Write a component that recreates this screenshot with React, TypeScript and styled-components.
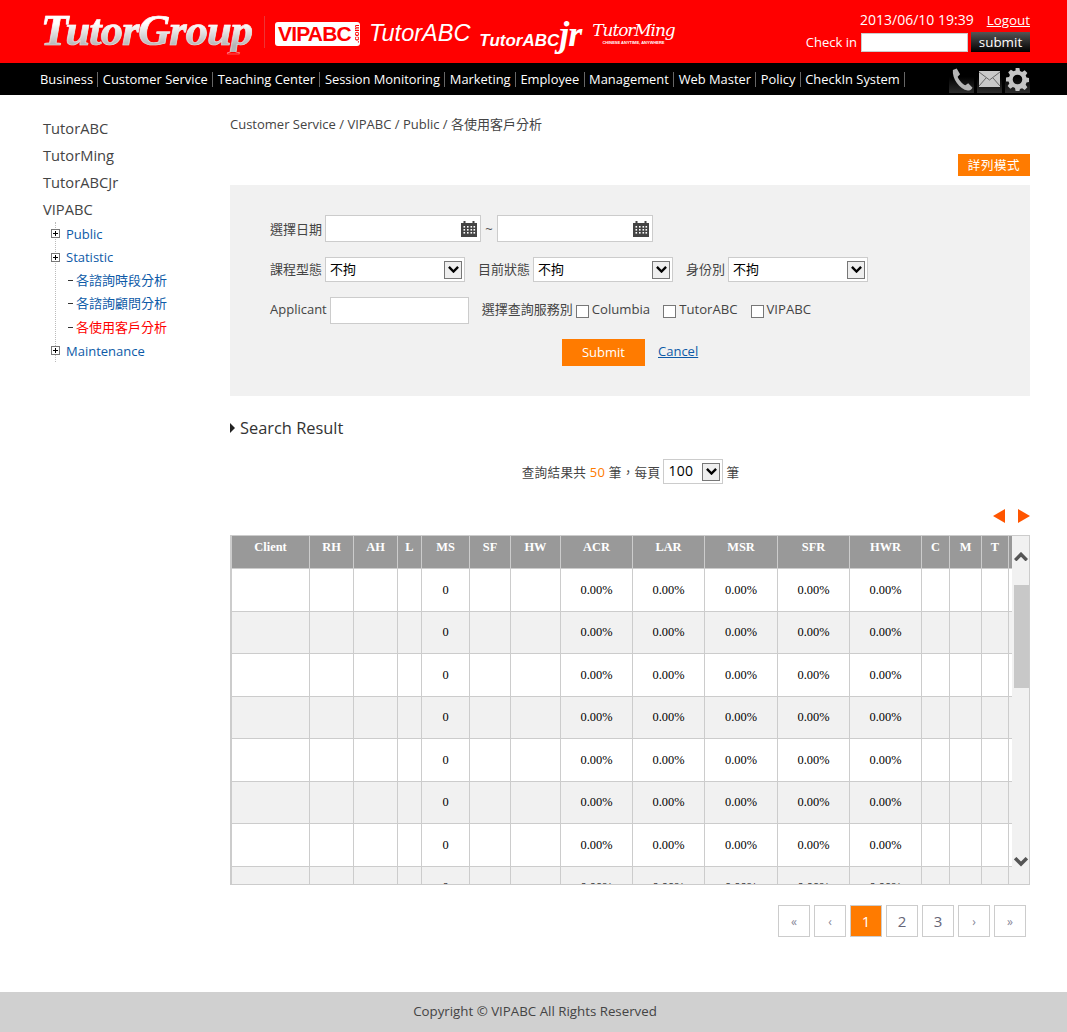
import React from 'react';
import styled, { createGlobalStyle } from 'styled-components';

const Global = createGlobalStyle`
  html, body { margin: 0; padding: 0; background: #fff; }
  body { font-family: "Open Sans", "Noto Sans CJK TC", sans-serif; color: #444; }
`;
const Page = styled.div`
  width: 1067px; min-height: 1032px; display: flex; flex-direction: column;
  font-size: 13px;
`;
const Header = styled.header`
  height: 63px; background: #ff0000; display: flex; justify-content: space-between; box-sizing: border-box;
  padding: 0 37px 0 41px; color: #fff;
`;
const Logos = styled.div`display: flex; align-items: center; height: 63px;`;
const BrandMain = styled.span`
  font-family: "Liberation Serif", serif; font-weight: 700; font-style: italic; font-size: 44.5px; letter-spacing: -1px;
  background: linear-gradient(#fff 35%, #b5b5b5 85%); -webkit-background-clip: text; background-clip: text; color: transparent;
  -webkit-text-stroke: .7px rgba(255,255,255,.55);
  line-height: 44px; margin-top: -3px;
`;
const BrandRule = styled.span`width: 1px; height: 32px; background: #e33; margin-left: 12px;`;
const VipBadge = styled.span`
  margin-left: 10px; background: #fff; color: #f00; border-radius: 3px; height: 24px; width: 85px; box-sizing: border-box;
  font-family: "Liberation Sans", sans-serif; font-weight: 700; font-size: 21px; line-height: 24px; padding-left: 3px; letter-spacing: -.8px;
  display: flex; overflow: hidden; margin-top: 4px;
`;
const Dotcom = styled.span`
  font-size: 8px; writing-mode: vertical-rl; transform: rotate(180deg); line-height: 9px; letter-spacing: 0; margin-left: 1px; text-align: center;
`;
const LogoText = styled.span<{ $size: number; $left: number; $bold?: boolean }>`
  margin-left: ${p => p.$left}px; font-size: ${p => p.$size}px; font-style: italic; color: #fff; white-space: nowrap; margin-top: 4px;
  font-family: "Liberation Sans", sans-serif;
  font-weight: ${p => (p.$bold ? 700 : 400)};
`;
const Jr = styled.span`font-family: "Liberation Serif", serif; font-size: 36px; font-weight: 700; letter-spacing: -1px;`;
const MingStack = styled.span`display: flex; flex-direction: column; align-items: center; margin-left: 11px; color: #fff; margin-top: 3px;`;
const MingName = styled.span`
  font-family: "DejaVu Serif", serif; font-style: italic; font-size: 17px; letter-spacing: -1.1px; line-height: 19px; white-space: nowrap;
`;
const MingTag = styled.span`font-family: "Liberation Sans", sans-serif; font-size: 4px; font-weight: 700; line-height: 5px; white-space: nowrap;`;
const TopRight = styled.div`
  display: flex; flex-direction: column; align-items: flex-end; padding-top: 11px; line-height: 18px;
`;
const DateLine = styled.div`display: flex; gap: 13px; font-size: 14px;`;
const Logout = styled.a`color: #fff; text-decoration: underline; font-size: 13.4px;`;
const CheckLine = styled.div`display: flex; align-items: center; margin-top: 3px; gap: 3px; font-size: 13px;`;
const CheckInput = styled.div`
  width: 107px; height: 19px; box-sizing: border-box; background: #fff; border: 1px solid #ccc; margin-left: 1px;
`;
const DarkBtn = styled.button`
  width: 59px; height: 20px; padding: 0; border: 0; color: #fff; font: inherit; font-size: 13.4px; line-height: 20px;
  background: linear-gradient(#555, #000);
`;
const Nav = styled.nav`
  height: 32px; background: #000; display: flex; justify-content: space-between; align-items: center; padding: 0 37px 0 40px;
`;
const NavList = styled.div`display: flex; align-items: center; color: #fff; font-size: 12.9px;`;
const NavItem = styled.a`
  color: #fff; white-space: nowrap; padding-right: 4.4px; margin-right: 4.4px; border-right: 1px solid #666; line-height: 15px;
`;
const NavIcons = styled.div`display: flex; gap: 3px; margin-right: 0;`;
const IconTile = styled.span`
  width: 25px; height: 27px; display: flex; align-items: center; justify-content: center;
  background: linear-gradient(#000 40%, #2c2c2c);
`;
const Body = styled.div`display: flex; flex: 1;`;
const Side = styled.aside`width: 230px; box-sizing: border-box; padding: 21px 0 0 43px; flex: none;`;
const SideTop = styled.div`font-size: 14.7px; height: 27px; line-height: 24px; color: #444;`;
const Tree = styled.ul`
  list-style: none; margin: -2px 0 0 12px; padding: 0; border-left: 1px dotted #bbb; width: 150px;
`;
const TreeRow = styled.li<{ $active?: boolean; $leaf?: boolean }>`
  height: 23.4px; box-sizing: border-box; display: flex; align-items: center; gap: ${p => (p.$leaf ? 3 : 6)}px;
  padding: 0 0 ${p => (p.$leaf ? 2 : 0)}px ${p => (p.$leaf ? 12 : 0)}px; font-size: 13px; white-space: nowrap;
  color: ${p => (p.$active ? '#ff0000' : '#0d5aa7')};
`;
const Plus = styled.span`
  width: 9px; height: 9px; margin-left: -5px; box-sizing: border-box; border: 1px solid #777; background: #fff; flex: none;
  display: flex; align-items: center; justify-content: center; color: #000;
`;
const Dash = styled.span`width: 5px; height: 1px; background: #333; flex: none; margin-top: 2px;`;
const Main = styled.main`width: 800px; flex: none; padding-top: 20px;`;
const Crumb = styled.div`font-size: 13px; line-height: 18px; color: #444;`;
const ModeRow = styled.div`display: flex; justify-content: flex-end; margin-top: 21px;`;
const ModeBtn = styled.button`
  width: 72px; height: 22px; border: 0; padding: 0 0 1px; background: #ff7b00; color: #fff; font: inherit; font-size: 12.5px; letter-spacing: .6px;
`;
const Panel = styled.section`
  margin-top: 9px; background: #f1f1f1; padding: 30px 0 30px 40px; display: flex; flex-direction: column; gap: 15px;
`;
const FormRow = styled.div`display: flex; align-items: center; height: 27px;`;
const SelectRow = styled(FormRow)`height: 25px;`;
const Label = styled.label<{ $left?: number; $lift?: number }>`
  margin-left: ${p => p.$left ?? 0}px; margin-right: 3px; margin-bottom: ${p => p.$lift ?? 0}px; white-space: nowrap; font-size: 13px; color: #444;
`;
const CheckText = styled.span`margin-bottom: 4px; font-size: 13.15px; white-space: nowrap;`;
const DateBox = styled.div`
  width: 156px; height: 27px; box-sizing: border-box; background: #fff; border: 1px solid #ccc;
  display: flex; align-items: center; justify-content: flex-end; padding-right: 3px;
`;
const Tilde = styled.span`width: 16px; text-align: center; color: #555;`;
const SelectBox = styled.div<{ $w: number }>`
  width: ${p => p.$w}px; height: 25px; box-sizing: border-box; background: #fff; border: 1px solid #ccc;
  display: flex; align-items: center; justify-content: space-between; padding: 0 2px 0 4px; color: #000; font-size: 13px;
`;
const SelectValue = styled.span<{ $big?: boolean }>`margin-bottom: 2px; font-size: ${p => (p.$big ? 14 : 13)}px;`;
const SelectArrow = styled.span`
  width: 18px; height: 18px; box-sizing: border-box; border: 1px solid #777; background: #eee; display: flex; align-items: center; justify-content: center;
`;
const TextBox = styled.div`width: 139px; height: 27px; box-sizing: border-box; background: #fff; border: 1px solid #ccc;`;
const Check = styled.span<{ $left?: number }>`
  width: 13px; height: 13px; box-sizing: border-box; background: #fff; border: 1px solid #777; margin: 1px 3px 0 ${p => p.$left ?? 0}px; flex: none;
`;
const Actions = styled.div`display: flex; align-items: center; padding-left: 292px;`;
const SubmitBtn = styled.button`
  width: 83px; height: 27px; border: 0; padding: 0 0 2px; background: #ff7b00; color: #fff; font: inherit; font-size: 13px;
`;
const Cancel = styled.a`margin: 0 0 4px 13px; color: #0d5aa7; text-decoration: underline;`;
const ResultTitle = styled.h2`
  margin: 20px 0 0; font-weight: 400; font-size: 16.4px; line-height: 24px; color: #333; display: flex; align-items: center; gap: 5px;
`;
const Tri = styled.span`
  width: 0; height: 0; border-left: 5px solid #222; border-top: 5px solid transparent; border-bottom: 5px solid transparent;
`;
const CountRow = styled.div`
  margin-top: 19px; height: 25px; display: flex; align-items: center; justify-content: center; gap: 3px; font-size: 12.6px; letter-spacing: .3px; padding-left: 1px;
`;
const CountText = styled.span`margin-bottom: 1px; white-space: pre;`;
const Em = styled.span`color: #ff7b00; font-size: 13px;`;
const ArrowRow = styled.div`display: flex; justify-content: flex-end; gap: 13px; margin-top: 25px;`;
const ArrowIcon = styled.span<{ $right?: boolean }>`
  width: 0; height: 0; border-top: 7px solid transparent; border-bottom: 7px solid transparent;
  ${p => (p.$right ? 'border-left: 12px solid #ff5500;' : 'border-right: 12px solid #ff5500;')}
`;
const Frame = styled.div`
  margin-top: 12px; height: 350px; box-sizing: border-box; border: 1px solid #ccc; display: flex;
`;
const Clip = styled.div`width: 781px; overflow: hidden; flex: none;`;
const Table = styled.table`
  border-collapse: separate; border-spacing: 0; table-layout: fixed; width: 781px;
  font-family: "Liberation Serif", serif; font-size: 12.4px; color: #000;
`;
const Th = styled.th`
  background: #999; color: #fff; padding: 4px 0 0; box-sizing: border-box; vertical-align: top; font-weight: 700; line-height: 14px;
  border-right: 1px solid #ccc; border-bottom: 1px solid #ccc; height: 33px;
  &:first-child { border-left: 1px solid #ccc; }
  &:last-child { border-right: 0; }
`;
const Tr = styled.tr<{ $odd: boolean }>`background: ${p => (p.$odd ? '#f1f1f1' : '#fff')};`;
const Td = styled.td`
  height: 42.5px; padding: 1px 0 0; box-sizing: border-box; text-align: center; border-right: 1px solid #ccc; border-bottom: 1px solid #ccc;
  &:first-child { border-left: 1px solid #ccc; }
  &:last-child { border-right: 0; }
`;
const Scroll = styled.div`
  flex: 1; background: #f1f1f1; display: flex; flex-direction: column; align-items: center;
`;
const ScrollUp = styled.div`height: 49px; width: 100%; display: flex; justify-content: center; padding-top: 16px; box-sizing: border-box;`;
const ScrollDown = styled.div`height: 44px; width: 100%; display: flex; align-items: center; justify-content: center;`;
const ScrollThumb = styled.div`width: 15px; height: 103px; background: #c8c8c8; margin-left: 1px;`;
const ScrollSpace = styled.div`flex: 1;`;
const Pager = styled.div`display: flex; justify-content: flex-end; gap: 4px; padding-right: 4px; margin-top: 20px;`;
const PageBtn = styled.a<{ $on?: boolean; $small?: boolean }>`
  width: 32px; height: 32px; box-sizing: border-box; border: 1px solid #ccc; display: flex; align-items: center; justify-content: center;
  font-size: ${p => (p.$small ? 12 : 15)}px; background: ${p => (p.$on ? '#ff7b00' : '#fff')}; color: ${p => (p.$on ? '#fff' : p.$small ? '#889' : '#667')};
`;
const Footer = styled.footer`
  height: 40px; background: #d0d0d0; display: flex; align-items: center; justify-content: center; margin-top: 55px; color: #444; padding: 0 0 2px 3px; box-sizing: border-box; font-size: 13.3px;
`;

const cols = [79, 44, 44, 24, 48, 41, 50, 72, 72, 73, 72, 72, 28, 32, 27, 3];
const heads = ['Client', 'RH', 'AH', 'L', 'MS', 'SF', 'HW', 'ACR', 'LAR', 'MSR', 'SFR', 'HWR', 'C', 'M', 'T', ''];
const rowCells = ['', '', '', '', '0', '', '', '0.00%', '0.00%', '0.00%', '0.00%', '0.00%', '', '', '', ''];

const Calendar = () => (
  <svg width="16" height="16" viewBox="0 0 16 16">
    <path fill="#444" d="M0 2h2.500V0h2v2h7V0h2v2H16v14H0z" />
    <g fill="#fff">
      {[5, 8, 11].map(y => [3, 6.5, 10, 13].map(x => <rect key={`${x}-${y}`} x={x - 0.5} y={y} width="1.6" height="1.6" />))}
    </g>
  </svg>
);
const Chevron = ({ up, size = 11, color = '#000', weight = 2.6 }: { up?: boolean; size?: number; color?: string; weight?: number }) => (
  <svg width={size} height={size * 0.67} viewBox="0 0 12 8">
    <path d={up ? 'M1 7l5-5 5 5' : 'M1 1l5 5 5-5'} fill="none" stroke={color} strokeWidth={weight} />
  </svg>
);
const PlusGlyph = () => (
  <svg width="7" height="7" viewBox="0 0 7 7"><path d="M3.500 1v5M1 3.500h5" stroke="#000" strokeWidth="1" /></svg>
);
const Select = ({ w, value, big }: { w: number; value: string; big?: boolean }) => (
  <SelectBox $w={w}><SelectValue $big={big}>{value}</SelectValue><SelectArrow><Chevron /></SelectArrow></SelectBox>
);

export default function App() {
  const nav = ['Business', 'Customer Service', 'Teaching Center', 'Session Monitoring', 'Marketing', 'Employee', 'Management', 'Web Master', 'Policy', 'CheckIn System'];
  return (
    <Page>
      <Global />
      <Header>
        <Logos>
          <BrandMain>TutorGroup</BrandMain>
          <BrandRule />
          <VipBadge>VIPABC<Dotcom>.com</Dotcom></VipBadge>
          <LogoText $size={23.5} $left={9}>TutorABC</LogoText>
          <LogoText $size={17} $left={9} $bold>TutorABC<Jr>jr</Jr></LogoText>
          <MingStack>
            <MingName>TutorMing</MingName>
            <MingTag>CHINESE ANYTIME, ANYWHERE</MingTag>
          </MingStack>
        </Logos>
        <TopRight>
          <DateLine><span>2013/06/10 19:39</span><Logout>Logout</Logout></DateLine>
          <CheckLine><span>Check in</span><CheckInput /><DarkBtn>submit</DarkBtn></CheckLine>
        </TopRight>
      </Header>
      <Nav>
        <NavList>{nav.map(n => <NavItem key={n}>{n}</NavItem>)}</NavList>
        <NavIcons>
          <IconTile>
            <svg width="23" height="23" viewBox="0 0 24 24"><path fill="#b5b5b5" d="M3 2l4-1.500 3.500 6-2.500 2.500c1 3 4.500 7.500 8 9l3-2 4.500 4.500c-1 2-3 3-5 3C10 22 2 11 3 2z" /></svg>
          </IconTile>
          <IconTile>
            <svg width="21" height="16" viewBox="0 0 21 16"><rect width="21" height="16" fill="#c8c8c8" /><path d="M0 1l10.500 8L21 1M0 15l7-8M21 15l-7-8" fill="none" stroke="#666" strokeWidth="1" /></svg>
          </IconTile>
          <IconTile>
            <svg width="23" height="23" viewBox="0 0 24 24"><path fill="#c4c4c4" fillRule="evenodd" d="M10 0h4l.6 3.200 2.200.9L19.500 2.300l2.800 2.800-1.800 2.700.9 2.200 3.200.6v4l-3.200.6-.9 2.200 1.800 2.700-2.800 2.800-2.700-1.800-2.200.9L14 24h-4l-.6-3.200-2.200-.9-2.700 1.800-2.800-2.800 1.800-2.700-.9-2.200L0 14v-4l3.200-.6.900-2.200L2.300 4.500l2.800-2.800 2.700 1.800 2.200-.9zM12 7a5 5 0 100 10 5 5 0 000-10z" /></svg>
          </IconTile>
        </NavIcons>
      </Nav>
      <Body>
        <Side>
          <SideTop>TutorABC</SideTop>
          <SideTop>TutorMing</SideTop>
          <SideTop>TutorABCJr</SideTop>
          <SideTop>VIPABC</SideTop>
          <Tree>
            <TreeRow><Plus><PlusGlyph /></Plus>Public</TreeRow>
            <TreeRow><Plus><PlusGlyph /></Plus>Statistic</TreeRow>
            <TreeRow $leaf><Dash />各諮詢時段分析</TreeRow>
            <TreeRow $leaf><Dash />各諮詢顧問分析</TreeRow>
            <TreeRow $leaf $active><Dash />各使用客戶分析</TreeRow>
            <TreeRow><Plus><PlusGlyph /></Plus>Maintenance</TreeRow>
          </Tree>
        </Side>
        <Main>
          <Crumb>Customer Service / VIPABC / Public / 各使用客戶分析</Crumb>
          <ModeRow><ModeBtn>詳列模式</ModeBtn></ModeRow>
          <Panel>
            <FormRow>
              <Label $lift={1}>選擇日期</Label>
              <DateBox><Calendar /></DateBox>
              <Tilde>~</Tilde>
              <DateBox><Calendar /></DateBox>
            </FormRow>
            <SelectRow>
              <Label $lift={2}>課程型態</Label>
              <Select w={140} value="不拘" />
              <Label $left={13} $lift={2}>目前狀態</Label>
              <Select w={140} value="不拘" />
              <Label $left={13} $lift={2}>身份別</Label>
              <Select w={140} value="不拘" />
            </SelectRow>
            <FormRow>
              <Label $lift={4}>Applicant</Label>
              <TextBox />
              <Label $left={13} $lift={4}>選擇查詢服務別</Label>
              <Check /><CheckText>Columbia</CheckText>
              <Check $left={13} /><CheckText>TutorABC</CheckText>
              <Check $left={13} /><CheckText>VIPABC</CheckText>
            </FormRow>
            <Actions><SubmitBtn>Submit</SubmitBtn><Cancel>Cancel</Cancel></Actions>
          </Panel>
          <ResultTitle><Tri />Search Result</ResultTitle>
          <CountRow>
            <CountText>查詢結果共 <Em>50</Em> 筆，每頁</CountText>
            <Select w={60} value="100" big />
            <CountText>筆</CountText>
          </CountRow>
          <ArrowRow><ArrowIcon /><ArrowIcon $right /></ArrowRow>
          <Frame>
            <Clip>
              <Table>
                <colgroup>{cols.map((c, i) => <col key={i} width={c} />)}</colgroup>
                <thead><tr>{heads.map((h, i) => <Th key={i}>{h}</Th>)}</tr></thead>
                <tbody>
                  {Array.from({ length: 10 }, (_, r) => (
                    <Tr key={r} $odd={r % 2 === 1}>
                      {rowCells.map((c, i) => <Td key={i}>{c}</Td>)}
                    </Tr>
                  ))}
                </tbody>
              </Table>
            </Clip>
            <Scroll>
              <ScrollUp><Chevron up size={14} color="#555" weight={3} /></ScrollUp>
              <ScrollThumb />
              <ScrollSpace />
              <ScrollDown><Chevron size={14} color="#555" weight={3} /></ScrollDown>
            </Scroll>
          </Frame>
          <Pager>
            <PageBtn $small>«</PageBtn>
            <PageBtn $small>‹</PageBtn>
            <PageBtn $on>1</PageBtn>
            <PageBtn>2</PageBtn>
            <PageBtn>3</PageBtn>
            <PageBtn $small>›</PageBtn>
            <PageBtn $small>»</PageBtn>
          </Pager>
        </Main>
      </Body>
      <Footer>Copyright © VIPABC All Rights Reserved</Footer>
    </Page>
  );
}
